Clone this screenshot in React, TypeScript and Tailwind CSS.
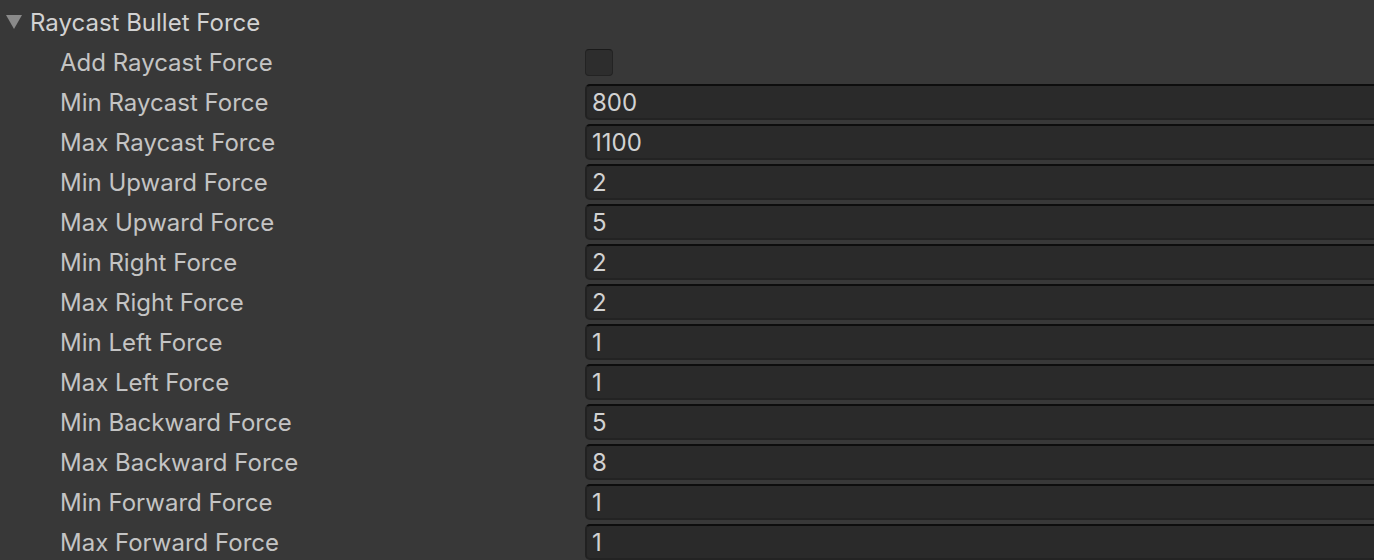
import React from 'react';

const fields: { label: string; value: string }[] = [
  { label: 'Min Raycast Force', value: '800' },
  { label: 'Max Raycast Force', value: '1100' },
  { label: 'Min Upward Force', value: '2' },
  { label: 'Max Upward Force', value: '5' },
  { label: 'Min Right Force', value: '2' },
  { label: 'Max Right Force', value: '2' },
  { label: 'Min Left Force', value: '1' },
  { label: 'Max Left Force', value: '1' },
  { label: 'Min Backward Force', value: '5' },
  { label: 'Max Backward Force', value: '8' },
  { label: 'Min Forward Force', value: '1' },
  { label: 'Max Forward Force', value: '1' },
];

const Row = ({ label, children }: { label: string; children: React.ReactNode }) => (
  <div className="flex h-10 items-center">
    <div className="w-[585px] shrink-0 pl-[60px] pt-[2px] text-[#c4c4c4]">{label}</div>
    <div className="flex h-full flex-1 items-center">{children}</div>
  </div>
);

const App = () => {
  return (
    <div
      className="h-[560px] w-[1374px] overflow-hidden bg-[#383838] text-[24px] leading-none"
      style={{ fontFamily: 'Inter, "Noto Sans", sans-serif' }}
    >
      <div className="flex h-[42px] items-center pt-[3px]">
        <svg width="16" height="16" viewBox="0 0 16 16" className="ml-[6px] mr-[8px]">
          <polygon points="0,0 16,0 8,14" fill="#8a8a8a" />
        </svg>
        <span className="text-[#d2d2d2]">Raycast Bullet Force</span>
      </div>
      <Row label="Add Raycast Force">
        <div className="h-[27px] w-[28px] rounded-[4px] border border-[#232323] border-t-[#1a1a1a] bg-[#2d2d2d]" />
      </Row>
      {fields.map((f) => (
        <Row key={f.label} label={f.label}>
          <div className="flex h-9 w-full items-center rounded-l-[5px] border-l-2 border-t-2 border-b-2 border-l-[#212121] border-t-[#0d0d0d] border-b-[#232323] bg-[#2a2a2a] pl-[5px] pt-[1px] text-[#d2d2d2]">
            {f.value}
          </div>
        </Row>
      ))}
    </div>
  );
};

export default App;
